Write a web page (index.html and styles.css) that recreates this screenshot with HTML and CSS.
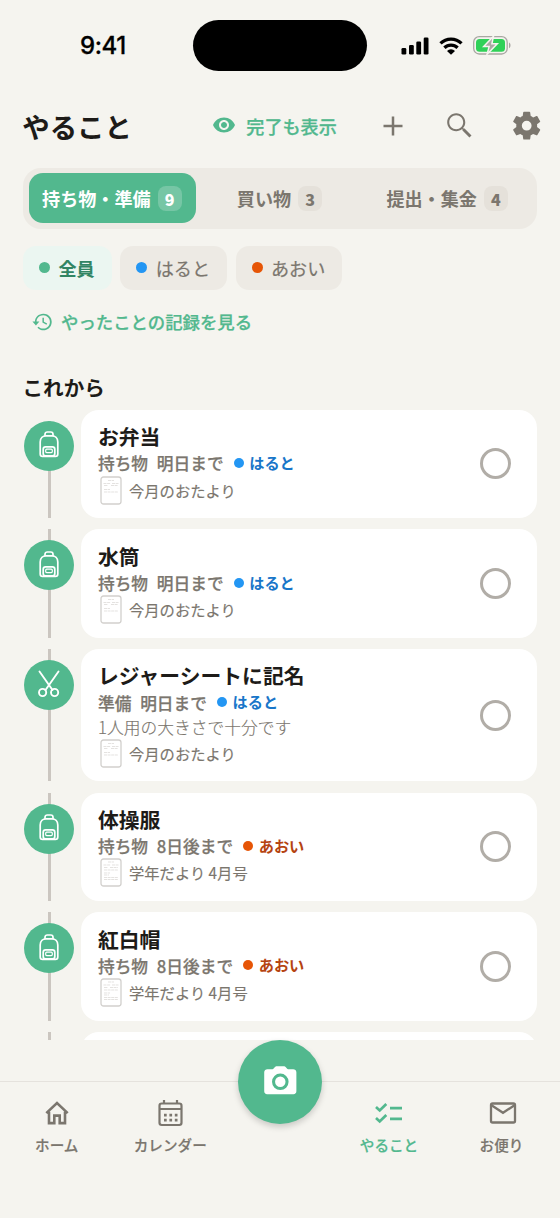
FILE: index.html
```html
<!DOCTYPE html>
<html lang="ja">
<head>
<meta charset="utf-8">
<title>やること</title>
<link rel="stylesheet" href="styles.css">
</head>
<body>
<svg class="defs" aria-hidden="true">
  <symbol id="bag" viewBox="0 0 20 27"><g fill="none" stroke="#fff" stroke-width="1.700"><path d="M6 5V3.200C6 1.700 7 1 8.300 1h3.400C13 1 14 1.700 14 3.200V5"/><path d="M1.200 11C1.200 7 4 4.800 7 4.800h6c3 0 5.800 2.200 5.800 6.200v12c0 1.600-.8 2.400-2.400 2.400H3.600c-1.600 0-2.400-.8-2.400-2.400z"/><rect x="4.200" y="15.800" width="11.600" height="9" rx="2.400"/><rect x="6.700" y="18.200" width="6.600" height="3.400" rx="1" stroke-width="1.200"/></g></symbol>
  <symbol id="scissors" viewBox="0 0 24 28"><g fill="none" stroke="#fff" stroke-width="1.900" stroke-linecap="round"><path d="M2.500 1.500 15.500 20M21.500 1.500 8.500 20"/><circle cx="5.600" cy="22.500" r="3.600"/><circle cx="17.600" cy="22.500" r="3.600"/></g></symbol>
  <symbol id="doc" viewBox="0 0 22 29"><rect x="1" y="1" width="20" height="27" rx="2.500" fill="#fff" stroke="#d2d0cd" stroke-width="1.300"/><g stroke="#d8d6d3" stroke-width=".7"><path d="M8 4.500h6M3.500 7.500h7M12 7.500h6.500M4 9.500h4M11 9.500h7M4 13.500h6M4 16h14" stroke-dasharray="3 .6"/></g></symbol>
  <symbol id="doc2" viewBox="0 0 22 29"><rect x="1" y="1" width="20" height="27" rx="2.500" fill="#fff" stroke="#d2d0cd" stroke-width="1.300"/><g stroke="#d8d6d3" stroke-width=".7"><path d="M8 4h6M3.500 7h7M12 7h6.500M4 9.500h4M10 9.500h8M4 12h14M4 15h6M4 17h5M4 19.500h14M4 21.500h14" stroke-dasharray="3 .6"/></g></symbol>
</svg>
<div class="screen">
  <div class="status">
    <span class="time">9:41</span>
    <span class="island"></span>
    <div class="signals">
      <svg width="28" height="18" viewBox="0 0 28 18"><rect x=".5" y="11" width="4.800" height="6.500" rx="1.300"/><rect x="8" y="8" width="4.800" height="9.500" rx="1.300"/><rect x="15.300" y="4.500" width="4.800" height="13" rx="1.300"/><rect x="22.700" y=".5" width="4.800" height="17" rx="1.300"/></svg>
      <svg class="wifi" width="24" height="18" viewBox="0 0 24 18"><g fill="none" stroke="#000" stroke-width="3.300"><path d="M1.500 6.400a15 15 0 0 1 21 0"/><path d="M5.400 10.800a9.500 9.500 0 0 1 13.200 0"/></g><path d="M8 13.900a5.700 5.700 0 0 1 8 0l-4 3.800z"/></svg>
      <svg width="38" height="19" viewBox="0 0 38 19"><rect x=".7" y=".7" width="33.500" height="17.300" rx="5.500" fill="none" stroke="#a9a7a2" stroke-width="1.300"/><rect x="3" y="3" width="29" height="12.700" rx="3.500" fill="#30d158"/><path d="M36 6.500c2 .7 2 5 0 5.700z" fill="#a9a7a2"/><path d="M20.500.2 10.700 10.600h5.400l-2 7.600 10.200-10.400h-5.400z" fill="#aaa8a3" stroke="#f5f4ef" stroke-width="1.500"/></svg>
    </div>
  </div>

  <header class="header">
    <h1>やること</h1>
    <div class="toggle">
      <svg width="24" height="24" viewBox="0 0 24 24"><path fill="#52b88e" d="M12 4.500C7 4.500 2.730 7.610 1 12c1.730 4.390 6 7.500 11 7.500s9.270-3.110 11-7.500c-1.730-4.390-6-7.500-11-7.500M12 17c-2.760 0-5-2.240-5-5s2.240-5 5-5 5 2.240 5 5-2.240 5-5 5m0-8c-1.660 0-3 1.340-3 3s1.340 3 3 3 3-1.340 3-3-1.340-3-3-3"/></svg>
      <span>完了も表示</span>
    </div>
    <span class="action"><svg width="20" height="20" viewBox="0 0 20 20"><path d="M10 .5v19M.5 10h19" stroke="#7b766e" stroke-width="2.500"/></svg></span>
    <span class="action"><svg width="33.400" height="33.400" viewBox="0 0 24 24"><path fill="#7b766e" d="M15.500 14h-.79l-.28-.27C15.410 12.590 16 11.110 16 9.500 16 5.910 13.090 3 9.500 3S3 5.910 3 9.500 5.910 16 9.500 16c1.610 0 3.090-.59 4.230-1.570l.27.28v.79l5 4.990L20.490 19zm-6 .5c-2.760 0-5-2.240-5-5s2.240-5 5-5 5 2.240 5 5-2.240 5-5 5"/></svg></span>
    <span class="action"><svg width="33.400" height="33.400" viewBox="0 0 24 24"><path fill="#7b766e" fill-rule="evenodd" d="M19.500 12c0-.34-.03-.66-.07-.98l2.110-1.650c.19-.15.240-.42.120-.64l-2-3.460c-.12-.22-.39-.3-.61-.22l-2.490 1c-.52-.4-1.080-.73-1.690-.98l-.38-2.650A.49.49 0 0 0 14 2h-4c-.25 0-.46.180-.49.420l-.38 2.650c-.61.250-1.170.590-1.690.980l-2.490-1c-.23-.09-.49 0-.61.220l-2 3.460c-.13.220-.07.490.12.640l2.110 1.650c-.04.320-.07.650-.07.980s.03.660.07.980l-2.110 1.650c-.19.150-.24.420-.12.640l2 3.460c.12.220.390.300.610.220l2.490-1c.52.400 1.080.730 1.690.980l.38 2.650c.03.240.240.420.490.420h4c.25 0 .46-.18.490-.42l.38-2.650c.61-.25 1.170-.59 1.690-.98l2.490 1c.23.090.490 0 .61-.22l2-3.460c.12-.22.070-.49-.12-.64l-2.110-1.650c.04-.32.070-.64.070-.98M12 15.500A3.500 3.500 0 1 1 12 8.500a3.500 3.500 0 0 1 0 7"/></svg></span>
  </header>

  <nav class="segments">
    <div class="segment active">持ち物・準備<b>9</b></div>
    <div class="segment">買い物<b>3</b></div>
    <div class="segment">提出・集金<b>4</b></div>
  </nav>

  <div class="chips">
    <div class="chip selected"><i class="dot green"></i>全員</div>
    <div class="chip"><i class="dot blue"></i>はると</div>
    <div class="chip"><i class="dot orange"></i>あおい</div>
  </div>

  <div class="history">
    <svg width="20" height="20" viewBox="0 0 24 24"><path fill="#52b88e" d="M13.500 2C8 2 3.600 6.300 3.500 11.500H.5l4.200 4.600 4.200-4.600H5.500c0-4.200 3.600-7.600 8-7.600s8 3.600 8 8-3.600 8-8 8c-2.200 0-4.200-.9-5.700-2.300l-1.300 1.400A10 10 0 1 0 13.500 2m-1 4.800v5.700l4.800 2.800.9-1.400-3.900-2.300V6.800z"/></svg>
    <span>やったことの記録を見る</span>
  </div>

  <h2>これから</h2>

  <main class="list">
    <div class="row">
      <div class="rail first"><span class="node"><svg width="20" height="27"><use href="#bag"/></svg></span></div>
      <article class="card"><div class="info"><h3>お弁当</h3><div class="meta"><span>持ち物</span><span>明日まで</span><i class="dot blue"></i><em class="haruto">はると</em></div><div class="source"><svg width="22" height="29"><use href="#doc"/></svg><span>今月のおたより</span></div></div><span class="check"></span></article>
    </div>
    <div class="row">
      <div class="rail"><span class="node"><svg width="20" height="27"><use href="#bag"/></svg></span></div>
      <article class="card"><div class="info"><h3>水筒</h3><div class="meta"><span>持ち物</span><span>明日まで</span><i class="dot blue"></i><em class="haruto">はると</em></div><div class="source"><svg width="22" height="29"><use href="#doc"/></svg><span>今月のおたより</span></div></div><span class="check"></span></article>
    </div>
    <div class="row">
      <div class="rail"><span class="node"><svg width="24" height="28"><use href="#scissors"/></svg></span></div>
      <article class="card"><div class="info"><h3>レジャーシートに記名</h3><div class="meta"><span>準備</span><span>明日まで</span><i class="dot blue"></i><em class="haruto">はると</em></div><p class="note">1人用の大きさで十分です</p><div class="source"><svg width="22" height="29"><use href="#doc"/></svg><span>今月のおたより</span></div></div><span class="check"></span></article>
    </div>
    <div class="row">
      <div class="rail"><span class="node"><svg width="20" height="27"><use href="#bag"/></svg></span></div>
      <article class="card"><div class="info"><h3>体操服</h3><div class="meta"><span>持ち物</span><span>8日後まで</span><i class="dot orange"></i><em class="aoi">あおい</em></div><div class="source"><svg width="22" height="29"><use href="#doc2"/></svg><span>学年だより 4月号</span></div></div><span class="check"></span></article>
    </div>
    <div class="row">
      <div class="rail"><span class="node"><svg width="20" height="27"><use href="#bag"/></svg></span></div>
      <article class="card"><div class="info"><h3>紅白帽</h3><div class="meta"><span>持ち物</span><span>8日後まで</span><i class="dot orange"></i><em class="aoi">あおい</em></div><div class="source"><svg width="22" height="29"><use href="#doc2"/></svg><span>学年だより 4月号</span></div></div><span class="check"></span></article>
    </div>
    <div class="row">
      <div class="rail"></div>
      <article class="card next"></article>
    </div>
  </main>

  <footer class="tabbar">
    <div class="tab"><svg width="30" height="30" viewBox="0 0 30 30"><path d="M6.500 14v11.300h5.300v-7.500h5.400v7.500h5.300V14M3.800 15.300 14.500 5.300l10.700 10" transform="translate(.5 -.2)" fill="none" stroke="#7b766e" stroke-width="2.600"/></svg><span>ホーム</span></div>
    <div class="tab"><svg width="30" height="30" viewBox="0 0 30 30"><g fill="none" stroke="#7b766e" stroke-width="2.200"><rect x="4.500" y="5.500" width="22" height="21.500" rx="2.200"/><path d="M4 11h22.500M9 2v4M22 2v4"/><path d="M9 17.200h13.500M9 22.200h13.500" stroke-width="2.700" stroke-dasharray="2.700 2.700"/></g></svg><span>カレンダー</span></div>
    <div class="tab"></div>
    <div class="tab on"><svg width="30" height="30" viewBox="0 0 30 30"><path d="m2 9 3.700 3.400L12.300 6M2 20l3.700 3.400 6.600-6.400M16 10.200h12M16 20.800h12" fill="none" stroke="#52b88e" stroke-width="2.700"/></svg><span>やること</span></div>
    <div class="tab"><svg width="30" height="30" viewBox="0 0 30 30"><g fill="none" stroke="#7b766e" stroke-width="2.300"><rect x="4" y="5.500" width="24" height="19" rx="1.600"/><path d="m4.500 7.300 11.500 7.500L27.500 7.300"/></g></svg><span>お便り</span></div>
    <div class="fab"><svg width="38.600" height="38.600" viewBox="0 0 24 24"><path fill="#fff" d="M9.500 2.600c-.9 0-1.600 1.900-2.300 1.900H4c-1.100 0-2 .7-2 1.800v11.900c0 1.100.7 1.800 1.800 1.800h16.400c1.100 0 1.800-.7 1.800-1.800V6.300c0-1.100-.9-1.800-2-1.800h-3.200c-.7 0-1.400-1.900-2.300-1.900z"/><circle cx="12" cy="12.300" r="4.200" fill="none" stroke="#52b88e" stroke-width="1.900"/></svg></div>
  </footer>
</div>
</body>
</html>
```

FILE: styles.css
```css
* { box-sizing: border-box; }
body {
  margin: 0;
  background: #f5f4ef;
  color: #1d1b18;
  font-family: "Noto Sans CJK JP", sans-serif;
}
h1, h2, h3, p { margin: 0; }
svg { display: block; flex: none; }
.defs { position: absolute; width: 0; height: 0; }
.screen { width: 560px; height: 1218px; overflow: hidden; display: flex; flex-direction: column; }

.status { height: 92px; flex: none; display: flex; align-items: center; padding: 0 0 1px 80px; color: #000; }
.time { width: 113px; font: 500 24px/30px Inter, sans-serif; letter-spacing: -.4px; -webkit-text-stroke: .3px; }
.island { width: 174px; height: 51px; border-radius: 26px; background: #000; }
.signals { display: flex; align-items: center; padding-left: 34px; }
.wifi { margin: 0 10px 0 10px; }

.header { height: 67px; flex: none; display: flex; align-items: center; padding-left: 22.300px; }
.header h1 { font-size: 27.400px; line-height: 40px; font-weight: 700; margin-top: 1px; }
.toggle { display: flex; align-items: center; gap: 10.500px; margin: 0 22.800px 0 auto; color: #52b88e; font-size: 18.100px; line-height: 24px; font-weight: 500; -webkit-text-stroke: .25px; }
.toggle svg { margin-top: -1px; }
.action { width: 66.800px; display: flex; justify-content: center; }

.segments { margin: 8.500px 23px 0; height: 61px; flex: none; padding: 5.500px; display: grid; grid-template-columns: repeat(3, 1fr); border-radius: 18px; background: #edeae4; }
.segment { display: flex; align-items: center; justify-content: center; gap: 7px; border-radius: 14px; color: #7b766e; font-size: 18.100px; line-height: 26px; font-weight: 700; }
.segment b { width: 24px; height: 25px; margin-right: 1px; border-radius: 8px; background: #e5e1da; font-size: 16px; text-align: center; }
.segment.active { background: #52b88e; color: #fff; }
.segment.active b { background: #76c6a5; }

.chips { display: flex; gap: 8.500px; margin: 17px 23px 0; }
.chip { height: 44.500px; display: flex; align-items: center; padding: 0 17px 0 16px; border-radius: 13px; background: #edeae4; color: #7b766e; font-size: 18.100px; -webkit-text-stroke: .2px; }
.chip.selected { background: #ebf6f1; color: #328564; font-weight: 700; -webkit-text-stroke: 0; }
.dot { flex: none; width: 11px; height: 11px; margin-right: 8.500px; border-radius: 50%; }
.green { background: #52b88e; }
.blue { background: #2396f3; }
.orange { background: #e65506; }

.history { display: flex; align-items: center; gap: 9px; height: 24px; margin: 20px 0 0 32px; color: #52b88e; font-size: 17.400px; line-height: 24px; font-weight: 500; -webkit-text-stroke: .25px; }
h2 { margin: 37px 0 0 22.500px; height: 39.300px; font-size: 20.600px; line-height: 32px; font-weight: 700; }

.list { height: 629.700px; flex: none; overflow: hidden; display: flex; flex-direction: column; gap: 11.200px; }
.row { display: flex; flex: none; padding: 0 23px 0 24px; }
.rail { width: 50px; margin-right: 7px; flex: none; padding-top: 11px; background: linear-gradient(#cbc6c0, #cbc6c0) 50% 0 / 3px 100% no-repeat; }
.rail.first { background-position: 50% 11px; }
.node { display: flex; width: 50px; height: 50px; align-items: center; justify-content: center; border-radius: 50%; background: #52b88e; }
.node svg { margin-top: -2px; }
.card { flex: 1; display: flex; align-items: center; padding: 12.300px 26px 13.700px 17px; border-radius: 18px; background: #fff; }
.card.next { height: 108px; }
.info { flex: 1; }
.card h3 { font-size: 20.800px; line-height: 29px; font-weight: 700; }
.meta { display: flex; align-items: center; height: 24.500px; color: #7b766e; font-size: 16.700px; line-height: 24px; font-weight: 500; -webkit-text-stroke: .25px; }
.meta span { margin-right: 8.800px; }
.meta .dot { width: 10px; height: 10px; margin: -1px 5.300px 0 1.500px; }
.meta em { margin-top: -3px; font-size: 15.200px; font-style: normal; font-weight: 700; -webkit-text-stroke: 0; }
.haruto { color: #1976c9; }
.aoi { color: #b54310; }
.note { height: 23.800px; font-size: 16.750px; line-height: 24px; font-weight: 300; color: #7b766e; -webkit-text-stroke: .15px; }
.source { display: flex; align-items: center; gap: 7px; height: 29px; padding-left: 2px; color: #7b766e; font-size: 15.300px; line-height: 23px; -webkit-text-stroke: .15px; }
.check { width: 31px; height: 31px; margin-top: 1px; border: 3px solid #b1ada7; border-radius: 50%; }

.tabbar { position: relative; flex: none; margin-top: 41.500px; height: 137px; padding-top: 16px; border-top: 1.500px solid #e5e2dd; display: grid; grid-template-columns: 113.500px 113.500px 1fr 108px 117px; }
.tab { display: flex; flex-direction: column; align-items: center; gap: 6px; color: #7b766e; font-size: 14.600px; line-height: 22px; font-weight: 500; -webkit-text-stroke: .2px; }
.tab.on { color: #52b88e; }
.fab { position: absolute; left: 238px; top: -42.500px; width: 84px; height: 84px; display: flex; align-items: center; justify-content: center; border-radius: 50%; background: #52b88e; box-shadow: 0 3px 6px rgba(0, 0, 0, .18); }
```
